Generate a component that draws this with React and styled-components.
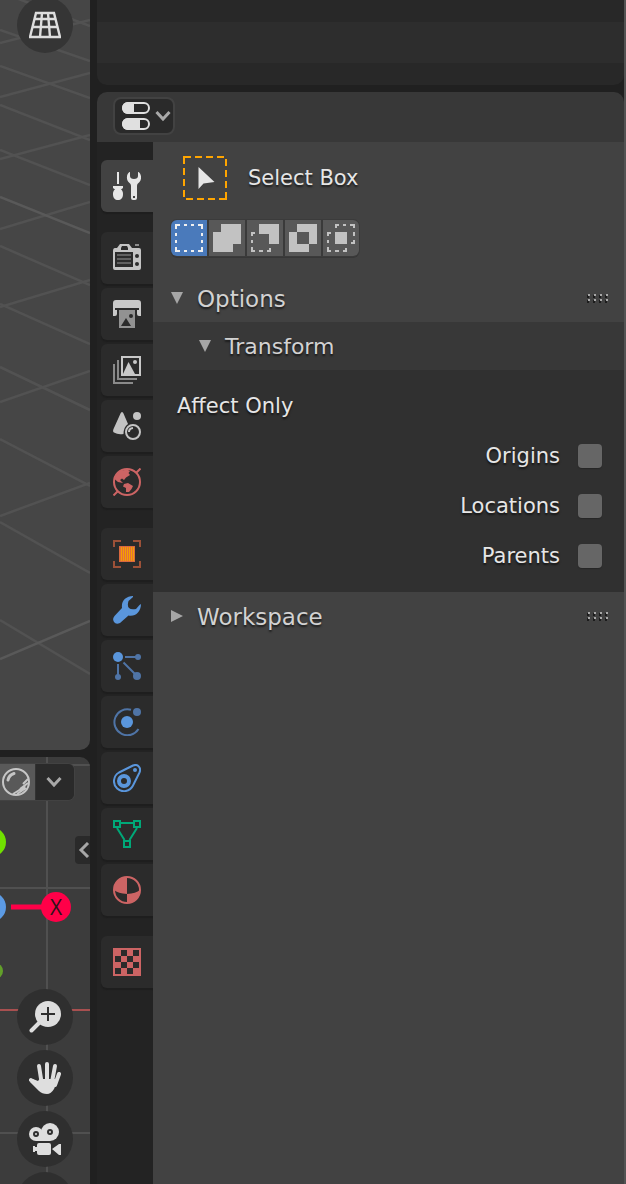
import React, { useState } from "react";
import styled, { createGlobalStyle } from "styled-components";

const GlobalStyle = createGlobalStyle`
  *, *::before, *::after { box-sizing: border-box; }
  body {
    margin: 0;
    background: #202020;
    font-family: "DejaVu Sans", sans-serif;
    font-size: 21px;
    color: #e6e6e6;
  }
  button { font: inherit; color: inherit; border: 0; padding: 0; margin: 0; cursor: pointer; }
  svg { display: block; flex: none; }
`;

/* ---------- window frame ---------- */

const Window = styled.div`
  display: flex;
  gap: 7px;
  height: 100vh;
  min-height: 1000px;
  overflow: hidden;
  background: #202020;
  border-right: 2px solid #535353;
`;

const Column = styled.div`
  display: flex;
  flex-direction: column;
  gap: 7px;
  min-width: 0;
  flex: ${(p) => (p.$fixed ? `0 0 ${p.$fixed}` : "1")};
`;

/* ---------- viewports ---------- */

const Viewport = styled.section`
  position: relative;
  overflow: hidden;
  flex: ${(p) => (p.$height ? `0 0 ${p.$height}` : "1")};
  background: ${(p) => p.$bg};
  border-radius: ${(p) => p.$radius};
`;

const Scene = styled.svg`
  position: absolute;
  top: 0;
  left: 0;
`;

const AxisLetter = styled.text`
  font-family: "Open Sans", sans-serif;
  font-size: 21px;
  fill: #2c1418;
`;

const NavStack = styled.div`
  position: absolute;
  top: ${(p) => p.$top};
  left: 17px;
  display: flex;
  flex-direction: column;
  gap: 5px;
`;

const NavButton = styled.button`
  display: grid;
  place-items: center;
  width: 56px;
  height: 56px;
  border-radius: 50%;
  background: ${(p) => p.$bg || "#2f2f2f"};
`;

const ShadingBar = styled.div`
  position: absolute;
  top: 7px;
  left: 0;
  display: flex;
  gap: 1px;
  height: 36px;
  border-radius: 0 6px 6px 0;
  overflow: hidden;
  background: #333;
  box-shadow: 0 0 0 1px #424242;
`;

const ShadingButton = styled.button`
  display: flex;
  align-items: center;
  justify-content: ${(p) => (p.$active ? "flex-end" : "center")};
  width: ${(p) => (p.$active ? "35px" : "38px")};
  padding-right: ${(p) => (p.$active ? "5px" : "2px")};
  background: ${(p) => (p.$active ? "#595959" : "#2a2a2a")};
`;

const SideToggle = styled.button`
  position: absolute;
  top: 79px;
  right: 0;
  display: grid;
  place-items: center end;
  width: 15px;
  height: 28px;
  border-radius: 4px 0 0 4px;
  background: #2a2a2a;
`;

/* ---------- timeline ---------- */

const Timeline = styled.section`
  display: flex;
  flex-direction: column;
  flex: 0 0 85px;
  padding: 22px 0;
  background: #282828;
  border-radius: 0 0 10px 10px;
`;

const TimelineRow = styled.div`
  flex: 1;
  background: #2d2d2d;
`;

/* ---------- properties editor ---------- */

const Editor = styled.section`
  display: flex;
  flex-direction: column;
  flex: 1;
  overflow: hidden;
  border-radius: 10px 10px 0 0;
`;

const EditorHeader = styled.header`
  flex: 0 0 50px;
  padding: 5px 16px;
  background: #383838;
`;

const EditorType = styled.button`
  display: flex;
  align-items: center;
  gap: 5px;
  width: 62px;
  height: 38px;
  padding: 0 3px 0 7px;
  background: #2a2a2a;
  border: 2px solid #424242;
  border-radius: 8px;
`;

const EditorBody = styled.div`
  display: flex;
  flex: 1;
`;

const TabRail = styled.nav`
  display: flex;
  flex-direction: column;
  gap: 20px;
  flex: 0 0 56px;
  padding: 18px 0 0 4px;
  background: #232323;
`;

const TabGroup = styled.div`
  display: flex;
  flex-direction: column;
  gap: 4px;
`;

const Tab = styled.button`
  display: grid;
  place-items: center;
  width: 100%;
  height: 52px;
  border-radius: 6px 0 0 6px;
  background: ${(p) => (p.$active ? "#424242" : "#2b2b2b")};
  box-shadow: 0 2px 1px #1e1e1e;
`;

const Main = styled.main`
  flex: 1;
  min-width: 0;
  background: #424242;
`;

const ToolHeader = styled.div`
  display: flex;
  flex-direction: column;
  gap: 20px;
  padding: 14px 18px 18px;
`;

const ToolTitle = styled.div`
  display: flex;
  align-items: center;
  gap: 21px;
  padding-left: 12px;
  height: 44px;
`;

const Label = styled.span`
  line-height: 26px;
  text-shadow: 0 2px 2px rgba(0, 0, 0, 0.6);
`;

const ModeGroup = styled.div`
  display: flex;
  gap: 2px;
  align-self: flex-start;
  border-radius: 6px;
  overflow: hidden;
  background: #3a3a3a;
  box-shadow: 0 0 0 1px #3b3b3b, 0 2px 0 #373737;
`;

const ModeButton = styled.button`
  display: grid;
  place-items: center;
  width: 36px;
  height: 36px;
  background: ${(p) => (p.$active ? "#4a7abb" : "#585858")};
`;

const PanelHeader = styled.div`
  display: flex;
  align-items: center;
  justify-content: space-between;
  height: 48px;
  padding: 0 15px 0 ${(p) => (p.$nested ? "46px" : "18px")};
  background: ${(p) => (p.$nested ? "#383838" : "transparent")};
`;

const PanelToggle = styled.button`
  display: flex;
  align-items: center;
  gap: 14px;
  background: none;
  color: #d2d2d2;
  font-size: ${(p) => (p.$nested ? "22px" : "23px")};
  ${Label} { padding-top: 2px; }
`;

const PanelBody = styled.div`
  padding: 11px 22px 11px 24px;
  background: #303030;
`;

const Row = styled.div`
  display: flex;
  align-items: center;
  justify-content: ${(p) => (p.$end ? "flex-end" : "flex-start")};
  height: 50px;
`;

const CheckLabel = styled.label`
  display: flex;
  align-items: center;
  gap: 18px;
`;

const CheckBox = styled.input`
  appearance: none;
  width: 24px;
  height: 24px;
  margin: 0;
  border-radius: 4px;
  background: #666;
  box-shadow: 0 1px 1px #262626;
  &:checked { background: #4a7abb; }
`;

/* ---------- icons ---------- */

const Icon = ({ children, size = 28, ...rest }) => (
  <svg width={size} height={size} viewBox={`0 0 ${size} ${size}`} fill="none" aria-hidden="true" {...rest}>
    {children}
  </svg>
);

const Chevron = ({ left }) => (
  <svg width={left ? 12 : 16} height={left ? 16 : 12} fill="none" stroke="#a8a8a8" strokeWidth="3" aria-hidden="true">
    <path d={left ? "M10 1L3 8L10 15" : "M1.500 2L8 9L14.500 2"} />
  </svg>
);

const Disclosure = ({ open }) => (
  <Icon size={12}>
    <path d={open ? "M0 0H12L6 12Z" : "M0 0L12 6L0 12Z"} fill="#a6a6a6" />
  </Icon>
);

const Grip = () => (
  <svg width="23" height="12" aria-hidden="true">
    {[0, 6, 12, 18].map((x) =>
      [2, 7].map((y) => (
        <g key={`${x}-${y}`}>
          <rect x={x + 1} y={y + 1} width="2" height="3" fill="#1c1c1c" />
          <rect x={x + 2} y={y} width="2" height="2" fill="#a8a8a8" />
        </g>
      ))
    )}
  </svg>
);

const SelectBoxIcon = () => (
  <Icon size={44}>
    <g stroke="#ffa500" strokeWidth="2" strokeDasharray="7 4">
      <path d="M1 1H43V43" />
      <path d="M1 1V43H43" />
    </g>
    <path d="M0 0H2V2H0ZM42 42H44V44H42Z" fill="#ffa500" />
    <path d="M15.500 11L31.500 26L20.500 27.500L15.500 33Z" fill="#e6e6e6" />
  </Icon>
);

const EditorTypeIcon = () => (
  <Icon>
    <rect x="1" y="1" width="26" height="10" rx="5" stroke="#e0e0e0" strokeWidth="2" />
    <path d="M12 0V12H6A6 6 0 0 1 6 0Z" fill="#e0e0e0" />
    <rect x="1" y="17" width="26" height="10" rx="5" stroke="#e0e0e0" strokeWidth="2" />
    <path d="M18 16V28H6A6 6 0 0 1 6 16Z" fill="#e0e0e0" />
  </Icon>
);

const ModeSet = () => (
  <Icon>
    <path
      d="M1 5V1H5M9 1H12M16 1H19M23 1H27V5M27 9V12M27 16V19M27 23V27H23M19 27H16M12 27H9M5 27H1V23M1 19V16M1 12V9"
      stroke="#f0f0f0"
      strokeWidth="2"
    />
  </Icon>
);
const ModeExtend = () => (
  <Icon><path d="M8 0H28V20H20V28H0V8H8Z" fill="#c2c2c2" /></Icon>
);
const ModeSubtract = () => (
  <Icon>
    <path d="M8 0H28V20H18V10H8Z" fill="#c2c2c2" />
    <path d="M4 9H1V12M1 16V19M1 23V27H4M8 27H12M16 27H19V24" stroke="#c2c2c2" strokeWidth="2" />
  </Icon>
);
const ModeInvert = () => (
  <Icon><path fillRule="evenodd" d="M8 0H28V20H20V28H0V8H8ZM8 8V20H20V8Z" fill="#c2c2c2" /></Icon>
);
const ModeIntersect = () => (
  <Icon>
    <rect x="8" y="8" width="12" height="12" fill="#c2c2c2" />
    <path
      d="M9 4V1H12M16 1H19M23 1H27V4M27 8V12M27 16V19H24M4 9H1V12M1 16V19M1 23V27H4M8 27H12M16 27H19V24"
      stroke="#c2c2c2"
      strokeWidth="2"
    />
  </Icon>
);

const ToolIcon = () => (
  <Icon>
    <g fill="#e6e6e6">
      <path d="M4 0H6V12H4ZM0 14H10V16L8 17.500C9.500 18.500 10 20 10 22C10 26 8 28 5 28C2 28 0 26 0 22C0 20 .5 18.500 2 17.500L0 16Z" />
      <path
        fillRule="evenodd"
        d="M16.500 0C13.500 2 13 7 15.500 10C17 11.500 18 12 18 14V26Q18 28 20 28H22Q24 28 24 26V14C24 12 25 11.500 26.500 10C29 7 28.500 2 25.500 0H25V4C25 6 23.500 7 21 7C18.500 7 17 6 17 4V0ZM20 24V26H22V24Z"
      />
    </g>
  </Icon>
);
const RenderIcon = () => (
  <Icon>
    <path
      fillRule="evenodd"
      fill="#c4c4c4"
      d="M0 7Q0 4 2 4H4L7 0H16L19 4H26Q28 4 28 6V24Q28 26 26 26H2Q0 26 0 24ZM8 4V6H15V4L14 2H9ZM2 8V23H20V8Z"
    />
    <rect x="22" y="0" width="4" height="2" fill="#8c8c8c" />
    <path d="M4 11H18M4 15H18M4 19H18" stroke="#606060" strokeWidth="2" />
    <circle cx="24" cy="12" r="2" fill="#2b2b2b" />
    <circle cx="24" cy="20" r="2" fill="#2b2b2b" />
  </Icon>
);
const OutputIcon = () => (
  <Icon>
    <path d="M3 0H25Q28 0 28 3V16H26Q24 16 24 14V9H4V14Q4 16 2 16H0V3Q0 0 3 0Z" fill="#c8c8c8" />
    <path d="M2 8H26V10H2Z" fill="#2b2b2b" />
    <path d="M6 10H22V28H6Z" fill="#929292" />
    <path d="M8 26L13 18L18 26Z" fill="#2b2b2b" />
    <circle cx="18" cy="16" r="2" fill="#2b2b2b" />
  </Icon>
);
const ViewLayerIcon = () => (
  <Icon>
    <path d="M5 4V23H24M1 8V27H20" stroke="#8a8a8a" strokeWidth="2" />
    <rect x="9" y="1" width="18" height="18" stroke="#c8c8c8" strokeWidth="2" />
    <path d="M10 18L15.500 6L22 18Z" fill="#c8c8c8" />
    <circle cx="22" cy="6" r="2" fill="#c8c8c8" />
  </Icon>
);
const SceneIcon = () => (
  <Icon>
    <path d="M9 0Q10 0 10.500 1.500L15 12Q10.500 15 10.500 22Q5 23 1 20.500Q-.5 20 .5 17L7.500 1.500Q8 0 9 0Z" fill="#c4c4c4" />
    <circle cx="24" cy="4" r="4" fill="#c4c4c4" />
    <circle cx="20" cy="20" r="7" stroke="#c4c4c4" strokeWidth="2" />
    <path d="M16 20Q16 16.500 20 16" stroke="#c4c4c4" strokeWidth="2" />
  </Icon>
);
const WorldIcon = () => (
  <Icon>
    <circle cx="14" cy="14" r="13" stroke="#cc6464" strokeWidth="2" />
    <path d="M23 5L27.500 .5M5 23L.5 27.500" stroke="#cc6464" strokeWidth="2" />
    <path
      d="M7 3L14 1.500L17 3L15.500 5L17 7L13 9.500L11 12L9 10.500L7 12L10 15L5 14L1.500 11Q3 6 7 3ZM11 16L15 15L20 18L18.500 21L16 24H13L13 20L10 18.500Z"
      fill="#cc6464"
    />
  </Icon>
);
const ObjectIcon = () => (
  <Icon>
    <defs>
      <pattern id="dither" width="2" height="2" patternUnits="userSpaceOnUse">
        <rect width="2" height="2" fill="#e0703c" />
        <rect width="1" height="2" fill="#f5a000" />
      </pattern>
    </defs>
    <path d="M1 7V1H8M20 1H27V7M27 21V27H20M8 27H1V21" stroke="#9c5138" strokeWidth="2" />
    <rect x="6" y="6" width="16" height="16" fill="#d9683f" />
    <rect x="7" y="7" width="14" height="14" fill="url(#dither)" />
  </Icon>
);
const ModifierIcon = () => (
  <Icon>
    <path
      d="M20 0C13 0 8 5 9 12L1.500 20Q-1 23 1 26T7 27L15.500 19.500C22 21 28 16 28 8L26.500 9L23 13Q18 14 16 12T15.500 5L20 1Z"
      fill="#5a96dc"
    />
  </Icon>
);
const ParticlesIcon = () => (
  <Icon>
    <path d="M12 5H23M5 12V23M10.500 10.500L24 24" stroke="#4f74a6" strokeWidth="2" />
    <circle cx="5" cy="5" r="5" fill="#5a96dc" />
    <g fill="#4f74a6">
      <circle cx="25" cy="5" r="3" />
      <circle cx="5" cy="25" r="3" />
      <circle cx="24" cy="24" r="4" />
    </g>
  </Icon>
);
const PhysicsIcon = () => (
  <Icon>
    <path d="M18 1.700A13 13 0 1 0 25.500 21" stroke="#4f74a6" strokeWidth="2" />
    <circle cx="14" cy="14" r="6" fill="#5a96dc" />
    <circle cx="24" cy="4" r="4" fill="#4f74a6" />
  </Icon>
);
const ConstraintIcon = () => (
  <Icon>
    <path d="M6 8.500L20 1.500C25 -.5 28.500 4 26.500 8.500L20 21.500A10 10 0 1 1 6 8.500Z" stroke="#5a96dc" strokeWidth="2" />
    <circle cx="11" cy="17" r="5" stroke="#5a96dc" strokeWidth="4" />
    <circle cx="22" cy="6" r="2" fill="#5a96dc" />
  </Icon>
);
const MeshDataIcon = () => (
  <Icon stroke="#00a878" strokeWidth="2">
    <rect x="1" y="1" width="6" height="6" />
    <rect x="21" y="1" width="6" height="6" />
    <rect x="11" y="21" width="6" height="6" />
    <path d="M8 3H20M4 8L11.500 20M24 8L16.500 20" />
  </Icon>
);
const MaterialIcon = () => (
  <Icon>
    <circle cx="14" cy="14" r="13" stroke="#cc6464" strokeWidth="2" />
    <path d="M14 1V18Q5 17.500 1 14A13 13 0 0 1 14 1ZM14 27V18Q23 17.500 27 14A13 13 0 0 1 14 27Z" fill="#cc6464" />
  </Icon>
);
const TextureIcon = () => (
  <Icon>
    <rect width="28" height="28" fill="#cc6464" />
    {[0, 1, 2, 3].map((r) =>
      [0, 1].map((c) => (
        <rect key={`${r}${c}`} x={2 + c * 12 + (r % 2 ? 0 : 6)} y={2 + r * 6} width="6" height="6" fill="#2b2b2b" />
      ))
    )}
  </Icon>
);

const GridIcon = () => (
  <svg width="32" height="28" fill="none" stroke="#dedede" strokeWidth="2.400" aria-hidden="true">
    <path d="M7 2H25L31 26H1ZM6 8H27M3 16H29M13 2L11 26M19 2L21 26" />
  </svg>
);
const ShadingSphere = () => (
  <Icon stroke="#c6c6c6">
    <circle cx="14" cy="14" r="13" strokeWidth="2" />
    <path d="M6 12Q7 7 12 5.500" strokeWidth="3" strokeLinecap="round" />
    <path d="M26 11L21 16M26 15L18 21M24 20L15 26M19 21L11 26M23 18L19 23" strokeWidth="2" />
  </Icon>
);
const ZoomIcon = () => (
  <Icon size={32}>
    <path d="M2.500 29.500L12 20" stroke="#dedede" strokeWidth="4" strokeLinecap="round" />
    <circle cx="19" cy="13" r="13" fill="#dedede" />
    <path d="M12 13H26M19 6V20" stroke="#2f2f2f" strokeWidth="2" />
  </Icon>
);
const HandIcon = () => (
  <Icon size={32}>
    <g stroke="#dedede" strokeWidth="4" strokeLinecap="round">
      <path d="M10 4L12.500 20M18 2V20M26 4L23 20" />
      <path d="M30 12L26 23M2 18L10 24" />
    </g>
    <path d="M4 17L9 19L10.500 17H27L28 20L25 27Q22 32 18 32Q13 32 10 29L1 20Z" fill="#dedede" />
  </Icon>
);
const CameraIcon = () => (
  <svg width="32" height="34" fill="#dedede" aria-hidden="true">
    <circle cx="7" cy="12" r="7" />
    <circle cx="21" cy="10" r="9" />
    <path d="M7 13H21V19H7ZM10 21H20Q22 21 22 23V31Q22 33 20 33H10Q8 33 8 31V29H6V30H4V24H6V25H8V23Q8 21 10 21ZM23 27L30 22H32V33H30Z" />
    <circle cx="7" cy="12" r="2" fill="none" stroke="#2f2f2f" strokeWidth="2" />
    <circle cx="21" cy="10" r="2" fill="none" stroke="#2f2f2f" strokeWidth="2" />
  </svg>
);

/* ---------- data ---------- */

const FLOOR_LINES = [
  [-8, 26], [30, 61], [66, 98], [105, 140], [150, 185], [246, 285], [304, 344],
  [367, 410], [439, 486], [522, 573], [620, 674], [43, 20], [97, 73], [159, 135],
  [229, 202], [307, 280], [402, 371], [516, 483],
];
const FLOOR_LINES_BRIGHT = [[197, 233], [659, 621]];

const TAB_GROUPS = [
  [["Tool", ToolIcon]],
  [
    ["Render", RenderIcon],
    ["Output", OutputIcon],
    ["View Layer", ViewLayerIcon],
    ["Scene", SceneIcon],
    ["World", WorldIcon],
  ],
  [
    ["Object", ObjectIcon],
    ["Modifiers", ModifierIcon],
    ["Particles", ParticlesIcon],
    ["Physics", PhysicsIcon],
    ["Constraints", ConstraintIcon],
    ["Object Data", MeshDataIcon],
    ["Material", MaterialIcon],
  ],
  [["Texture", TextureIcon]],
];

const MODES = [
  ["Set", ModeSet],
  ["Extend", ModeExtend],
  ["Subtract", ModeSubtract],
  ["Invert", ModeInvert],
  ["Intersect", ModeIntersect],
];

const Panel = ({ title, open, nested, onToggle }) => (
  <PanelHeader $nested={nested}>
    <PanelToggle $nested={nested} aria-expanded={open} onClick={onToggle}>
      <Disclosure open={open} />
      <Label>{title}</Label>
    </PanelToggle>
    {!nested && <Grip />}
  </PanelHeader>
);

export default function App() {
  const [mode, setMode] = useState("Set");
  const [open, setOpen] = useState({ Options: true, Transform: true, Workspace: false });
  const toggle = (name) => () => setOpen((o) => ({ ...o, [name]: !o[name] }));

  return (
    <>
      <GlobalStyle />
      <Window>
        <Column $fixed="90px">
          <Viewport $height="750px" $bg="#464646" $radius="0 0 10px 0" aria-label="3D viewport">
            <Scene width="90" height="750" strokeWidth="2.500" aria-hidden="true">
              {FLOOR_LINES.map(([a, b]) => (
                <line key={a} x1="0" y1={a} x2="90" y2={b} stroke="#525252" />
              ))}
              {FLOOR_LINES_BRIGHT.map(([a, b]) => (
                <line key={a} x1="0" y1={a} x2="90" y2={b} stroke="#595959" />
              ))}
            </Scene>
            <NavStack $top="-3px">
              <NavButton $bg="#353535" aria-label="Toggle perspective"><GridIcon /></NavButton>
            </NavStack>
          </Viewport>

          <Viewport $bg="#3c3c3c" $radius="0 10px 0 0" aria-label="Front viewport">
            <Scene width="90" height="480" aria-hidden="true">
              <path d="M47 0V480M0 8H90M0 131H90M0 376H90" stroke="#505050" strokeWidth="2" />
              <path d="M0 253H90" stroke="#a85050" strokeWidth="2" />
              <circle cx="-9" cy="85" r="15" fill="#70e000" />
              <circle cx="-5" cy="214" r="8" fill="#62a02a" />
              <path d="M11 150H45" stroke="#ff0048" strokeWidth="5" />
              <circle cx="-9" cy="150" r="15" fill="#5c9be4" />
              <circle cx="56" cy="150" r="15" fill="#ff0048" />
              <AxisLetter x="56" y="158" textAnchor="middle">X</AxisLetter>
            </Scene>
            <ShadingBar>
              <ShadingButton $active aria-label="Rendered shading"><ShadingSphere /></ShadingButton>
              <ShadingButton aria-label="Shading options"><Chevron /></ShadingButton>
            </ShadingBar>
            <SideToggle aria-label="Show sidebar"><Chevron left /></SideToggle>
            <NavStack $top="232px">
              <NavButton aria-label="Zoom"><ZoomIcon /></NavButton>
              <NavButton aria-label="Pan"><HandIcon /></NavButton>
              <NavButton aria-label="Camera view"><CameraIcon /></NavButton>
              <NavButton aria-label="Toggle projection"><GridIcon /></NavButton>
            </NavStack>
          </Viewport>
        </Column>

        <Column>
          <Timeline aria-label="Timeline"><TimelineRow /></Timeline>

          <Editor aria-label="Properties">
            <EditorHeader>
              <EditorType aria-label="Editor type" aria-haspopup="menu">
                <EditorTypeIcon />
                <Chevron />
              </EditorType>
            </EditorHeader>
            <EditorBody>
              <TabRail>
                {TAB_GROUPS.map((group, i) => (
                  <TabGroup key={i}>
                    {group.map(([name, Glyph]) => (
                      <Tab key={name} aria-label={name} $active={name === "Tool"}>
                        <Glyph />
                      </Tab>
                    ))}
                  </TabGroup>
                ))}
              </TabRail>
              <Main>
                <ToolHeader>
                  <ToolTitle>
                    <SelectBoxIcon />
                    <Label>Select Box</Label>
                  </ToolTitle>
                  <ModeGroup role="group" aria-label="Selection mode">
                    {MODES.map(([name, Glyph]) => (
                      <ModeButton
                        key={name}
                        aria-label={name}
                        aria-pressed={mode === name}
                        $active={mode === name}
                        onClick={() => setMode(name)}
                      >
                        <Glyph />
                      </ModeButton>
                    ))}
                  </ModeGroup>
                </ToolHeader>

                <Panel title="Options" open={open.Options} onToggle={toggle("Options")} />
                {open.Options && (
                  <>
                    <Panel nested title="Transform" open={open.Transform} onToggle={toggle("Transform")} />
                    {open.Transform && (
                      <PanelBody>
                        <Row><Label>Affect Only</Label></Row>
                        {["Origins", "Locations", "Parents"].map((name) => (
                          <Row key={name} $end>
                            <CheckLabel>
                              <Label>{name}</Label>
                              <CheckBox type="checkbox" />
                            </CheckLabel>
                          </Row>
                        ))}
                      </PanelBody>
                    )}
                  </>
                )}
                <Panel title="Workspace" open={open.Workspace} onToggle={toggle("Workspace")} />
              </Main>
            </EditorBody>
          </Editor>
        </Column>
      </Window>
    </>
  );
}
